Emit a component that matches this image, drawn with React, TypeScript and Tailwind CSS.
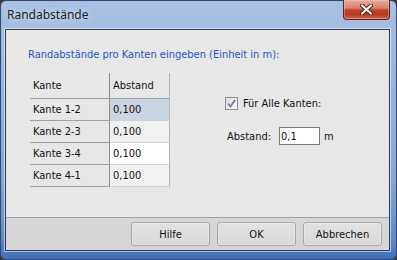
const body = "font-['DejaVu_Sans_Condensed','DejaVu_Sans',sans-serif] text-[11px] leading-[13px] text-[#111]";

const rows = [
  { name: "Kante 1-2", value: "0,100", bg: "bg-[#c9d5e1]" },
  { name: "Kante 2-3", value: "0,100", bg: "bg-[#f1f1f1]" },
  { name: "Kante 3-4", value: "0,100", bg: "bg-white" },
  { name: "Kante 4-1", value: "0,100", bg: "bg-[#f1f1f1]" },
];

function CloseButton() {
  return (
    <div className="flex h-[20px] w-[47px] items-center justify-center rounded-b-[4px] border border-t-0 border-[#5e2418] bg-[linear-gradient(180deg,#e8ab9c_0%,#d88470_42%,#c2452d_52%,#b8381f_75%,#d4684a_100%)] shadow-[inset_0_0_0_1px_rgba(255,210,200,0.35)]">
      <svg width="13" height="11" viewBox="0 0 13 11">
        <path d="M2 1.5 L11 9.5 M11 1.5 L2 9.5" stroke="#4a1a12" strokeWidth="4" strokeLinecap="round" />
        <path d="M2 1.5 L11 9.5 M11 1.5 L2 9.5" stroke="#ffffff" strokeWidth="2.2" strokeLinecap="round" />
      </svg>
    </div>
  );
}

function Checkbox() {
  return (
    <div className="flex h-[13px] w-[13px] items-center justify-center border border-[#8e8f8f] bg-[linear-gradient(135deg,#dcdcdc,#f6f6f6)]">
      <svg width="9" height="9" viewBox="0 0 9 9">
        <path d="M1 4.5 L3.5 7.5 L8 1" stroke="#6f7f9e" strokeWidth="1.8" fill="none" />
      </svg>
    </div>
  );
}

function Button({ label }: { label: string }) {
  return (
    <button className="h-[24px] w-[79px] rounded-[3px] border border-[#a8a8a8] bg-[linear-gradient(180deg,#e2e2e2,#d9d9d9)] text-center shadow-[inset_0_0_0_1px_rgba(255,255,255,0.3)]">
      {label}
    </button>
  );
}

export default function App() {
  return (
    <div className="h-[260px] w-[397px] bg-[#3e3634]">
      <div className="flex h-full w-full flex-col rounded-[6px] border border-[#34496b] bg-[linear-gradient(180deg,#a8c1e3_0%,#98b5de_30%,#86a6d6_70%,#5f8bcb_92%,#3f6db8_100%)] pb-[8px] pl-[4px] pr-[6px]">
        <div className="flex h-[28px] items-start justify-between pl-[2px]">
          <span className="self-center font-['Noto_Sans',sans-serif] text-[12px] text-[#1b1b1b] [text-shadow:0_0_6px_rgba(255,255,255,0.9)]">
            Randabstände
          </span>
          <div className="-mt-px">
            <CloseButton />
          </div>
        </div>

        <div className={`flex flex-1 flex-col border border-[#2c3a52] shadow-[0_0_0_1px_rgba(255,255,255,0.55)] ${body}`}>
          <div className="flex flex-1 flex-col bg-[#e7e7e7] pt-[18px]">
            <p className="pl-[22px] text-[#1d55c2]">Randabstände pro Kanten eingeben (Einheit in m):</p>

            <div className="mt-[12px] flex pl-[24px]">
              <div className="flex w-[140px] flex-col">
                <div className="flex h-[26px] border-b border-[#a0a0a0]">
                  <div className="flex w-[80px] items-center border-r border-[#8c8c8c] pl-[3px]">Kante</div>
                  <div className="flex w-[60px] items-center border-r border-[#b4b4b4] pl-[3px]">Abstand</div>
                </div>
                {rows.map((r) => (
                  <div key={r.name} className="flex h-[22px]">
                    <div className="flex w-[80px] items-center border-b border-r border-[#a0a0a0] border-r-[#8c8c8c] pl-[3px]">
                      {r.name}
                    </div>
                    <div className={`flex w-[60px] items-center border-b border-r border-[#d2d2d2] border-r-[#b4b4b4] pl-[3px] ${r.bg}`}>
                      {r.value}
                    </div>
                  </div>
                ))}
              </div>

              <div className="ml-[55px] mt-[24px] flex flex-col">
                <div className="flex items-center gap-[5px]">
                  <Checkbox />
                  <span>Für Alle Kanten:</span>
                </div>
                <div className="ml-[2px] mt-[17px] flex items-center">
                  <span className="w-[52px]">Abstand:</span>
                  <div className="flex h-[18px] w-[41px] items-center border border-[#7a7a7a] bg-white pl-[1px]">0,1</div>
                  <span className="ml-[4px]">m</span>
                </div>
              </div>
            </div>
          </div>

          <div className="flex h-[33px] justify-end gap-[7px] border-t border-[#a2a2a2] bg-[#d6d6d6] pr-[7px] pt-[4px]">
            <Button label="Hilfe" />
            <Button label="OK" />
            <Button label="Abbrechen" />
          </div>
        </div>
      </div>
    </div>
  );
}
